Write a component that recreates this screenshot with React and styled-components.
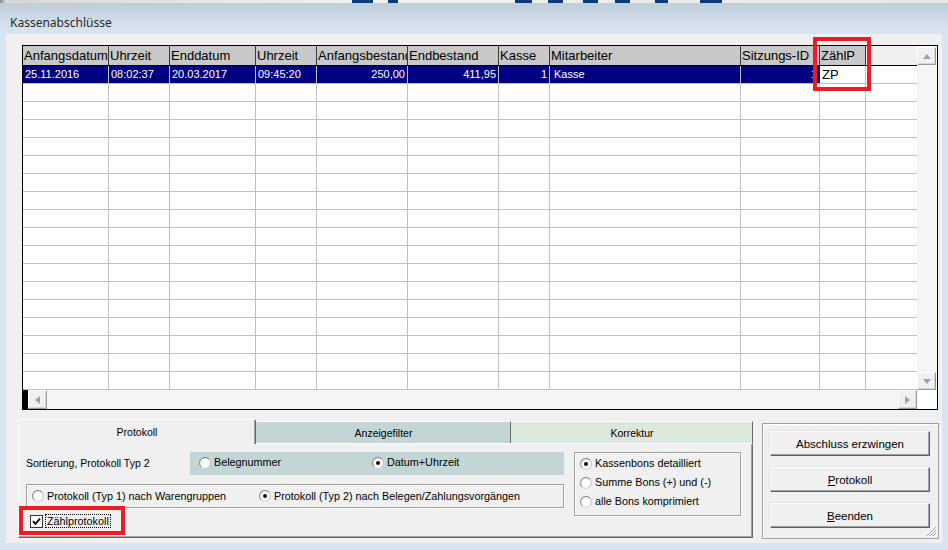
import React from 'react';
import styled, { createGlobalStyle } from 'styled-components';

const Global = createGlobalStyle`
  html, body { margin: 0; padding: 0; background: #d9e4f1; }
  body { width: 948px; height: 550px; overflow: hidden; font-family: "Liberation Sans", Arial, sans-serif; }
  #root { width: 948px; height: 550px; }
`;

const Window = styled.div`
  position: relative;
  width: 948px;
  height: 550px;
  background: #d9e4f1;
  display: flex;
  flex-direction: column;
  overflow: hidden;
`;

const Backdrop = styled.div`
  height: 3px;
  flex: none;
  background:
    linear-gradient(90deg,
      transparent 0 352px, #0b3a78 352px 373px, transparent 373px 388px,
      #0b3a78 388px 398px, transparent 398px 515px, #0b3a78 515px 532px,
      transparent 532px 548px, #0b3a78 548px 563px, transparent 563px 583px,
      #0b3a78 583px 598px, transparent 598px 615px, #0b3a78 615px 630px,
      transparent 630px 655px, #0b3a78 655px 668px, transparent 668px 700px,
      #0b3a78 700px 722px, transparent 722px),
    linear-gradient(90deg, #7d8790 0, #d8d8d8 6px, #f2f2f2 40%, #e6e6e6 100%);
`;

const TitleBar = styled.div`
  height: 31px;
  flex: none;
  box-sizing: border-box;
  padding: 12px 0 0 10px;
  background: linear-gradient(#bfcddb, #d3dfec 70%, #d9e4f1);
  font: 12px/16px "Noto Sans", "DejaVu Sans", sans-serif;
  color: #2a2a2a;
`;

const Client = styled.div`
  margin: 0 6px;
  height: 509px;
  flex: none;
  box-sizing: border-box;
  background: #f0f0f0;
  padding: 11px 4px 0 12px;
  display: flex;
  flex-direction: column;
`;

/* ---------- Data grid ---------- */

const GridFrame = styled.div`
  box-sizing: border-box;
  width: 916px;
  height: 365px;
  margin-left: 4px;
  border: 1px solid #000;
  display: grid;
  grid-template-columns: 894px 20px;
  grid-template-rows: 344px 19px;
  background: #fff;
`;

const DataArea = styled.div`
  overflow: hidden;
  display: flex;
  flex-direction: column;
`;

const HeaderRow = styled.div`
  display: flex;
  height: 20px;
  flex: none;
  box-sizing: border-box;
  border-bottom: 1px solid #000;
  background: #f0f0f0;
`;

const HeaderCell = styled.div`
  flex: 0 0 ${p => p.$w}px;
  box-sizing: border-box;
  border-right: 1px solid #3a3a3a;
  background: #c8c8c8;
  font: 13px/19px "Liberation Sans", Arial, sans-serif;
  color: #000;
  padding-left: 1px;
  white-space: nowrap;
  overflow: hidden;
`;

const Row = styled.div`
  display: flex;
  height: 18px;
  flex: none;
  box-sizing: border-box;
  border-bottom: 1px solid #c0c0c0;
`;

const Cell = styled.div`
  flex: 0 0 ${p => p.$w}px;
  box-sizing: border-box;
  border-right: 1px solid ${p => p.$line || '#c0c0c0'};
  background: ${p => p.$bg || '#fff'};
  color: ${p => p.$fg || '#000'};
  font: ${p => p.$fs || 11}px/17px "Liberation Sans", Arial, sans-serif;
  text-align: ${p => (p.$right ? 'right' : 'left')};
  padding: 0 ${p => (p.$right ? 2 : 0)}px 0 ${p => (p.$right ? 0 : p.$pl ?? 2)}px;
  white-space: nowrap;
  overflow: hidden;
`;

const Filler = styled.div`
  flex: 1;
  background: ${p => p.$bg || '#fff'};
`;

const checker = `
  background-color: #f7f7f7;
  background-image: repeating-conic-gradient(#ffffff 0 25%, #ececec 0 50%);
  background-size: 2px 2px;
`;

const VScroll = styled.div`
  display: flex;
  flex-direction: column;
  padding-top: 1px;
  ${checker}
`;

const HScroll = styled.div`
  display: flex;
  ${checker}
`;

const Stub = styled.div`
  flex: 0 0 5px;
  background: #000;
`;

const Track = styled.div`
  flex: 1;
`;

const Corner = styled.div`
  background: #fff;
`;

const ScrollBtn = styled.div`
  flex: none;
  box-sizing: border-box;
  width: ${p => p.$w}px;
  height: ${p => p.$h}px;
  background: #f0f0f0;
  border: 1px solid;
  border-color: #ffffff #9a9a9a #9a9a9a #ffffff;
  box-shadow: inset -1px -1px 0 #d6d6d6;
  display: flex;
  align-items: center;
  justify-content: center;
`;

const Arrow = styled.span`
  width: 0;
  height: 0;
  border-style: solid;
  ${p => {
    const c = '#a2a2a2';
    switch (p.$dir) {
      case 'up': return `border-width: 0 4px 5px 4px; border-color: transparent transparent ${c} transparent;`;
      case 'down': return `border-width: 5px 4px 0 4px; border-color: ${c} transparent transparent transparent;`;
      case 'left': return `border-width: 4px 5px 4px 0; border-color: transparent ${c} transparent transparent;`;
      default: return `border-width: 4px 0 4px 5px; border-color: transparent transparent transparent ${c};`;
    }
  }}
`;

/* ---------- Bottom area ---------- */

const BottomRow = styled.div`
  display: flex;
  align-items: flex-start;
  margin-top: 9px;
`;

const TabControl = styled.div`
  width: 735px;
  height: 119px;
  display: flex;
  flex-direction: column;
  flex: none;
`;

const TabStrip = styled.div`
  display: flex;
  align-items: flex-end;
  height: 24px;
  flex: none;
`;

const Tab = styled.div`
  position: relative;
  z-index: ${p => (p.$active ? 1 : 0)};
  flex: 0 0 ${p => p.$w}px;
  box-sizing: border-box;
  height: ${p => (p.$active ? 25 : 22)}px;
  margin-bottom: ${p => (p.$active ? -1 : 0)}px;
  background: ${p => p.$bg};
  border-top: 1px solid #ffffff;
  border-left: 1px solid ${p => (p.$active ? '#ffffff' : 'transparent')};
  border-right: 1px solid #6b6b6b;
  border-radius: ${p => (p.$active ? '2px 2px 0 0' : '0')};
  box-shadow: ${p => (p.$active ? 'inset -1px 0 0 #a0a0a0' : 'none')};
  display: flex;
  align-items: center;
  justify-content: center;
  padding-bottom: ${p => (p.$active ? 1 : 0)}px;
  font: 10.5px/12px "Liberation Sans", Arial, sans-serif;
  color: #000;
`;

const TabPanel = styled.div`
  box-sizing: border-box;
  height: 95px;
  flex: none;
  background: #f0f0f0;
  border-top: 1px solid #ffffff;
  border-left: 1px solid #ffffff;
  border-right: 1px solid #696969;
  border-bottom: 1px solid #696969;
  box-shadow: inset -1px -1px 0 #a0a0a0;
  padding: 8px 0 0 7px;
  display: flex;
  align-items: flex-start;
`;

const LeftCol = styled.div`
  width: 538px;
  flex: none;
  display: flex;
  flex-direction: column;
`;

const SortRow = styled.div`
  display: flex;
  height: 23px;
  align-items: center;
`;

const SortLabel = styled.div`
  flex: 0 0 164px;
  font: 10.5px/13px "Liberation Sans", Arial, sans-serif;
  color: #000;
`;

const SortBox = styled.div`
  flex: 0 0 374px;
  box-sizing: border-box;
  height: 23px;
  background: #c3d5d5;
  display: flex;
  align-items: center;
  padding: 0 0 2px 9px;
`;

const GroupBox = styled.div`
  box-sizing: border-box;
  width: ${p => p.$w}px;
  height: ${p => p.$h}px;
  margin-top: ${p => p.$mt || 0}px;
  margin-left: ${p => p.$ml || 0}px;
  border: 1px solid #a0a0a0;
  box-shadow: inset 1px 1px 0 #ffffff, 1px 1px 0 #ffffff;
  display: flex;
  flex-direction: ${p => (p.$column ? 'column' : 'row')};
  align-items: ${p => (p.$column ? 'stretch' : 'center')};
  padding: ${p => (p.$column ? '1px 0 0 5px' : '0 0 0 5px')};
  flex-shrink: 0;
`;

const RadioItem = styled.label`
  display: flex;
  align-items: center;
  gap: 3px;
  flex: 0 0 ${p => (p.$w ? `${p.$w}px` : 'auto')};
  height: ${p => (p.$h ? `${p.$h}px` : 'auto')};
  font: 10.8px/13px "Liberation Sans", Arial, sans-serif;
  color: #000;
  white-space: nowrap;
`;

const RadioDot = styled.span`
  box-sizing: border-box;
  width: 12px;
  height: 12px;
  flex: none;
  border-radius: 50%;
  border: 1px solid #8a8a8a;
  border-color: #7a7a7a #c8c8c8 #dadada #8a8a8a;
  background: radial-gradient(circle, #ffffff 0 45%, #ececec 75%, #d8d8d8 100%);
  display: flex;
  align-items: center;
  justify-content: center;
  &::after {
    content: "";
    width: 4px;
    height: 4px;
    border-radius: 50%;
    background: ${p => (p.$on ? '#111' : 'transparent')};
  }
`;

const CheckRow = styled.div`
  display: flex;
  align-items: center;
  gap: 2px;
  margin-top: 6px;
  padding-left: 4px;
`;

const CheckBox = styled.span`
  box-sizing: border-box;
  width: 13px;
  height: 13px;
  flex: none;
  background: #fff;
  border: 1px solid #333;
  display: flex;
  align-items: center;
  justify-content: center;
`;

const FocusLabel = styled.span`
  border: 1px dotted #000;
  padding: 0 1px;
  font: 10.8px/12px "Liberation Sans", Arial, sans-serif;
  color: #000;
`;

const ButtonPanel = styled.div`
  position: relative;
  box-sizing: border-box;
  width: 177px;
  height: 116px;
  margin: 4px 0 0 9px;
  flex: none;
  border: 1px solid #a0a0a0;
  box-shadow: inset 1px 1px 0 #ffffff;
  padding: 7px 0 0 7px;
  display: flex;
  flex-direction: column;
  gap: 11px;
`;

const Button = styled.div`
  box-sizing: border-box;
  width: 160px;
  height: 25px;
  background: #f0f0f0;
  border: 1px solid;
  border-color: #ffffff #5f5f5f #5f5f5f #ffffff;
  box-shadow: inset -1px -1px 0 #a0a0a0, -1px -1px 0 #e3e3e3;
  display: flex;
  align-items: center;
  justify-content: center;
  font: 11.5px/14px "Liberation Sans", Arial, sans-serif;
  color: #000;
  u { text-decoration: underline; text-underline-offset: 1px; }
`;

const Grip = styled.svg`
  position: absolute;
  right: 1px;
  bottom: 1px;
`;

const Highlight = styled.div`
  position: absolute;
  box-sizing: border-box;
  left: ${p => p.$x}px;
  top: ${p => p.$y}px;
  width: ${p => p.$w}px;
  height: ${p => p.$h}px;
  border: 4px solid #ec1c24;
  pointer-events: none;
`;

const columns = [
  { label: 'Anfangsdatum', w: 86 },
  { label: 'Uhrzeit', w: 61 },
  { label: 'Enddatum', w: 86 },
  { label: 'Uhrzeit', w: 61 },
  { label: 'Anfangsbestand', w: 91 },
  { label: 'Endbestand', w: 91 },
  { label: 'Kasse', w: 51 },
  { label: 'Mitarbeiter', w: 191 },
  { label: 'Sitzungs-ID', w: 79 },
  { label: 'ZählP', w: 46 },
];

const firstRow = [
  { v: '25.11.2016' },
  { v: '08:02:37' },
  { v: '20.03.2017' },
  { v: '09:45:20' },
  { v: '250,00', right: true },
  { v: '411,95', right: true },
  { v: '1', right: true },
  { v: 'Kasse', pl: 4 },
  { v: '1', right: true, line: '#000080' },
  { v: 'ZP', plain: true },
];

const EMPTY_ROWS = 17;

function Radio({ on, children, w, h }) {
  return (
    <RadioItem $w={w} $h={h}>
      <RadioDot $on={on} />
      {children}
    </RadioItem>
  );
}

export default function App() {
  return (
    <>
      <Global />
      <Window>
        <Backdrop />
        <TitleBar>Kassenabschlüsse</TitleBar>
        <Client>
          <GridFrame>
            <DataArea>
              <HeaderRow>
                {columns.map((c, i) => (
                  <HeaderCell key={i} $w={c.w}>{c.label}</HeaderCell>
                ))}
                <Filler $bg="#f0f0f0" />
              </HeaderRow>
              <Row>
                {firstRow.map((c, i) => (
                  <Cell
                    key={i}
                    $w={columns[i].w}
                    $bg={c.plain ? '#fff' : '#000080'}
                    $fg={c.plain ? '#000' : '#fff'}
                    $fs={c.plain ? 13 : 11}
                    $right={c.right}
                    $pl={c.pl}
                    $line={c.line}
                  >
                    {c.v}
                  </Cell>
                ))}
                <Filler />
              </Row>
              {Array.from({ length: EMPTY_ROWS }).map((_, r) => (
                <Row key={r}>
                  {columns.map((c, i) => (
                    <Cell key={i} $w={c.w} />
                  ))}
                  <Filler />
                </Row>
              ))}
            </DataArea>
            <VScroll>
              <ScrollBtn $w={19} $h={18}><Arrow $dir="up" /></ScrollBtn>
              <Track />
              <ScrollBtn $w={19} $h={18}><Arrow $dir="down" /></ScrollBtn>
            </VScroll>
            <HScroll>
              <Stub />
              <ScrollBtn $w={19} $h={19}><Arrow $dir="left" /></ScrollBtn>
              <Track />
              <ScrollBtn $w={19} $h={19}><Arrow $dir="right" /></ScrollBtn>
            </HScroll>
            <Corner />
          </GridFrame>

          <BottomRow>
            <TabControl>
              <TabStrip>
                <Tab $active $w={238} $bg="#f0f0f0">Protokoll</Tab>
                <Tab $w={255} $bg="#c3d5d5">Anzeigefilter</Tab>
                <Tab $w={242} $bg="#dde7dd">Korrektur</Tab>
              </TabStrip>
              <TabPanel>
                <LeftCol>
                  <SortRow>
                    <SortLabel>Sortierung, Protokoll Typ 2</SortLabel>
                    <SortBox>
                      <Radio w={173}>Belegnummer</Radio>
                      <Radio on>Datum+Uhrzeit</Radio>
                    </SortBox>
                  </SortRow>
                  <GroupBox $w={538} $h={24} $mt={9}>
                    <Radio w={227}>Protokoll (Typ 1) nach Warengruppen</Radio>
                    <Radio on>Protokoll (Typ 2) nach Belegen/Zahlungsvorgängen</Radio>
                  </GroupBox>
                  <CheckRow>
                    <CheckBox>
                      <svg width="9" height="9" viewBox="0 0 9 9">
                        <path d="M1 4.2 L3.4 6.8 L8 1.6" fill="none" stroke="#000" strokeWidth="1.8" />
                      </svg>
                    </CheckBox>
                    <FocusLabel>Zählprotokoll</FocusLabel>
                  </CheckRow>
                </LeftCol>
                <GroupBox $w={167} $h={64} $ml={10} $column>
                  <Radio on h={19}>Kassenbons detailliert</Radio>
                  <Radio h={19}>Summe Bons (+) und (-)</Radio>
                  <Radio h={19}>alle Bons komprimiert</Radio>
                </GroupBox>
              </TabPanel>
            </TabControl>

            <ButtonPanel>
              <Button>Abschluss erzwingen</Button>
              <Button><u>P</u>rotokoll</Button>
              <Button><u>B</u>eenden</Button>
              <Grip width="12" height="12" viewBox="0 0 12 12">
                <path d="M11 2 L2 11 M11 5 L5 11 M11 8 L8 11" stroke="#a0a0a0" strokeWidth="1" />
                <path d="M11.8 2.8 L2.8 11.8 M11.8 5.8 L5.8 11.8 M11.8 8.8 L8.8 11.8" stroke="#ffffff" strokeWidth="1" />
              </Grip>
            </ButtonPanel>
          </BottomRow>
        </Client>

        <Highlight $x={813} $y={37} $w={58} $h={54} />
        <Highlight $x={19} $y={506} $w={106} $h={29} />
      </Window>
    </>
  );
}
